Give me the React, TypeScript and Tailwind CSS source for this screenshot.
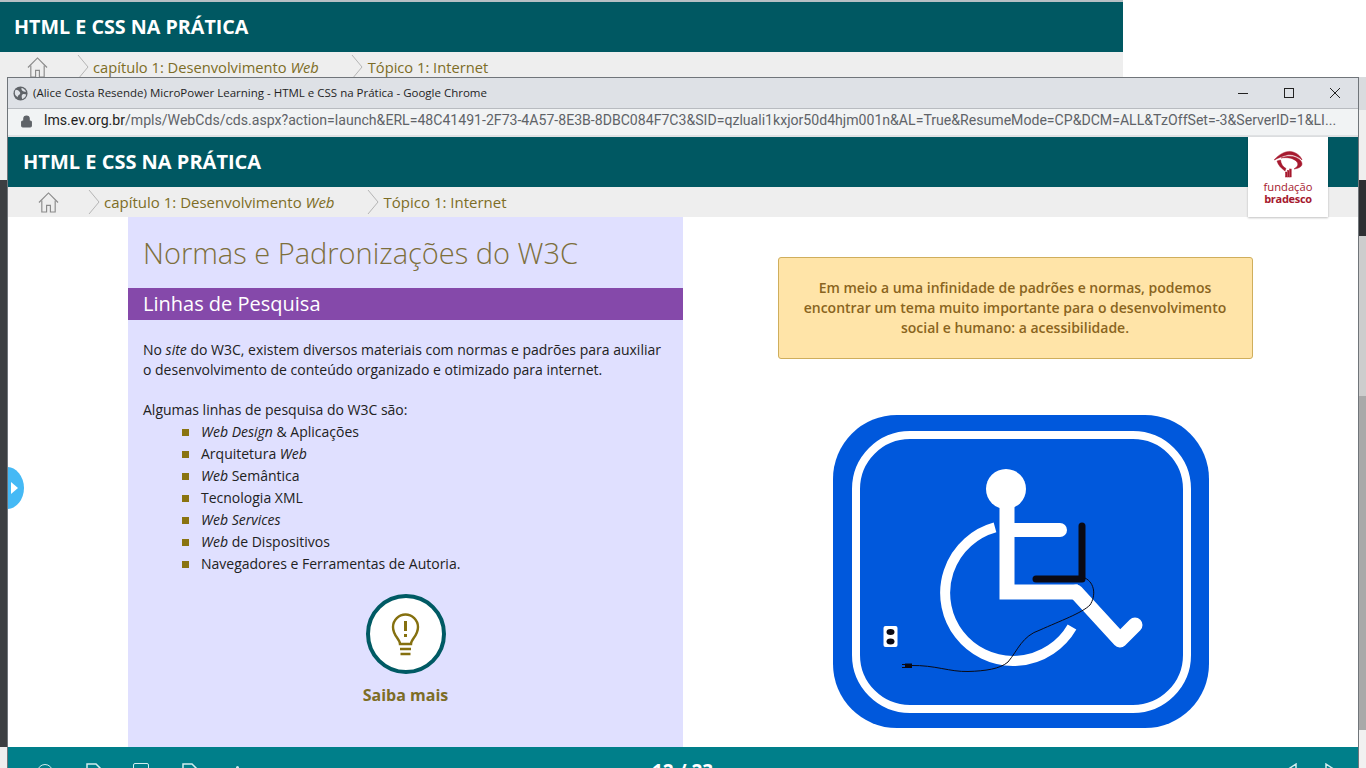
import React from 'react';
import { Lock } from 'lucide-react';

const openSans = { fontFamily: '"Open Sans", sans-serif' };

function HomeIcon({ className }: { className?: string }) {
  return (
    <svg viewBox="0 0 22 22" className={className} fill="none" stroke="#8a8a8a" strokeWidth="1.2">
      <path d="M1 11 11 1l10 10" />
      <path d="M4 9v12h5v-7h4v7h5V9" />
    </svg>
  );
}

function Chevron({ className }: { className?: string }) {
  return (
    <svg viewBox="0 0 12 26" className={className} fill="none" stroke="#b5b5b5" strokeWidth="1">
      <path d="M1 1l10 12L1 25" />
    </svg>
  );
}

function Breadcrumb({ className }: { className: string }) {
  return (
    <div className={`flex items-center text-[#7d6d26] ${className}`}>
      <HomeIcon className="w-[21px] h-[21px] mr-[29px]" />
      <Chevron className="w-[12px] h-[26px] mr-[4px]" />
      <span>capítulo 1: Desenvolvimento <em>Web</em></span>
      <Chevron className="w-[12px] h-[26px] ml-[32px] mr-[5px]" />
      <span>Tópico 1: Internet</span>
    </div>
  );
}

// Bradesco tree mark, coordinates are page pixels
function LogoMark() {
  return (
    <svg viewBox="1248 137 80 42" className="w-[80px] h-[42px] shrink-0" fill="#a6192e" stroke="#a6192e" strokeWidth="0.5">
      <path d="M1274 160C1280 153 1288 150 1293 152C1298 153.5 1301 157 1302 160C1298 156 1292 154 1287 155C1282 156 1279 158 1274 160Z" />
      <path d="M1281 158C1288 155 1296 156 1300 160C1304 164 1302 168 1294 169C1297 167 1299 165 1297 162C1294 158 1287 157 1281 158Z" />
      <path d="M1277 161C1278 165 1281 168 1285 171L1286 168.5C1283 167 1281 164 1280.5 160Z" />
      <rect x="1285.5" y="172" width="1.5" height="5" />
      <rect x="1287.6" y="170.5" width="1.5" height="6.5" />
      <rect x="1289.7" y="169" width="1.5" height="8" />
    </svg>
  );
}

function SignImage() {
  return (
    <svg viewBox="833 415 376 313" className="w-[376px] h-[313px]">
      <rect x="833" y="415" width="376" height="313" rx="64" fill="#0058dc" />
      <rect x="856" y="435" width="331" height="274" rx="54" fill="none" stroke="#fff" strokeWidth="8" />
      <circle cx="1006" cy="489" r="20" fill="#fff" />
      <path d="M1007 500V592H1078" fill="none" stroke="#fff" strokeWidth="15" />
      <path d="M1007 530H1060" fill="none" stroke="#fff" strokeWidth="14" strokeLinecap="round" />
      <path d="M1076 592 1120 640 1135 625" fill="none" stroke="#fff" strokeWidth="15" strokeLinecap="round" strokeLinejoin="round" />
      <path d="M995 527.4A68 68 0 1 0 1072 627" fill="none" stroke="#fff" strokeWidth="10" />
      <path d="M1082 526V579H1036" fill="none" stroke="#0a0a14" strokeWidth="7" strokeLinecap="round" strokeLinejoin="round" />
      <path d="M911 665.5C935 665 950 672 968 671.5C985 671 1000 669 1008 662C1018 650 1022 636 1040 630C1060 621 1082 613 1090 605C1096 596 1095 583 1085 578" fill="none" stroke="#0a0a14" strokeWidth="1" />
      <rect x="905" y="663.5" width="7" height="4.5" fill="#0a0a14" />
      <rect x="902" y="664" width="3" height="1" fill="#0a0a14" />
      <rect x="902" y="667" width="3" height="1" fill="#0a0a14" />
      <rect x="883.5" y="626" width="14" height="21" rx="2" fill="#fff" />
      <ellipse cx="890.5" cy="632" rx="4" ry="3" fill="#0a0a14" />
      <ellipse cx="890.5" cy="641.5" rx="4" ry="3" fill="#0a0a14" />
    </svg>
  );
}

const researchLines: React.ReactNode[] = [
  <><em>Web Design</em> &amp; Aplicações</>,
  <>Arquitetura <em>Web</em></>,
  <><em>Web</em> Semântica</>,
  <>Tecnologia XML</>,
  <><em>Web Services</em></>,
  <><em>Web</em> de Dispositivos</>,
  <>Navegadores e Ferramentas de Autoria.</>,
];

function LeftPanel() {
  return (
    <div className="w-[555px] ml-[120px] shrink-0 bg-[#e0e0ff] flex flex-col">
      <h1 className="px-[15px] pt-[16px] h-[71px] text-[29px] leading-[40px] font-light text-[#7d6f3c]">
        Normas e Padronizações do W3C
      </h1>
      <h2 className="h-[32px] bg-[#8549aa] px-[15px] text-[20px] leading-[32px] text-white">Linhas de Pesquisa</h2>
      <div className="px-[15px] pt-[20px] text-[14px] leading-[20px] text-[#222]">
        <p>
          No <em>site</em> do W3C, existem diversos materiais com normas e padrões para auxiliar o desenvolvimento de
          conteúdo organizado e otimizado para internet.
        </p>
        <p className="mt-[20px]">Algumas linhas de pesquisa do W3C são:</p>
        <ul className="mt-[1px] pl-[39px]">
          {researchLines.map((line, idx) => (
            <li key={idx} className="flex items-center h-[22px]">
              <span className="w-[7px] h-[7px] bg-[#8a7410] mr-[12px]" />
              <span>{line}</span>
            </li>
          ))}
        </ul>
      </div>
      <div className="flex flex-col items-center mt-[19px]">
        <div className="w-[80px] h-[80px] rounded-full bg-white border-[4px] border-[#005a64] flex items-center justify-center">
          <svg viewBox="0 0 29 43" className="w-[29px] h-[43px]" fill="none" stroke="#85700f" strokeWidth="2.4">
            <path d="M9 31c0-5-7-8-7-17C2 7 8 1.5 14.5 1.5S27 7 27 14c0 9-7 12-7 17z" />
            <path d="M14.5 8v10" strokeWidth="3" />
            <path d="M14.5 21v3" strokeWidth="3" />
            <path d="M9 36h11M9.5 41h10" />
          </svg>
        </div>
        <div className="mt-[10px] text-[16px] leading-[22px] font-bold text-[#7d6d26]">Saiba mais</div>
      </div>
    </div>
  );
}

function RightPanel() {
  return (
    <div className="flex-1 flex flex-col items-center pt-[40px]">
      <div className="w-[475px] h-[102px] mr-[11px] bg-[#ffe4a8] border border-[#cfae5c] rounded-[3px] flex items-center justify-center px-[20px] text-center text-[14px] leading-[20px] font-semibold text-[#8a6420]">
        Em meio a uma infinidade de padrões e normas, podemos encontrar um tema muito importante para o desenvolvimento social e humano: a acessibilidade.
      </div>
      <div className="mt-[56px] -mr-[1px]">
        <SignImage />
      </div>
    </div>
  );
}

function DocIcon({ className }: { className?: string }) {
  return (
    <svg viewBox="0 0 16 20" className={className} fill="none" stroke="#cfeef0" strokeWidth="1.5">
      <path d="M1 1h9l5 5v13H1z" />
    </svg>
  );
}

function BottomBar() {
  return (
    <div className="h-[40px] bg-[#007f8a] flex items-start pt-[16px] relative text-white">
      <div className="flex items-start ml-[29px]">
        <div className="w-[16px] h-[16px] mt-[1px] rounded-full border-[1.5px] border-[#cfeef0]" />
        <DocIcon className="w-[16px] h-[20px] ml-[33px]" />
        <div className="w-[16px] h-[16px] ml-[31px] rounded-t-[2px] border-[1.5px] border-[#cfeef0]" />
        <DocIcon className="w-[16px] h-[20px] ml-[33px]" />
        <div className="w-[3px] h-[3px] mt-[3px] ml-[38px] rounded-full bg-[#cfeef0]" />
      </div>
      <div className="absolute left-[644px] top-[11px] text-[19px] leading-[26px] font-bold whitespace-nowrap">12 / 23</div>
      <div className="absolute right-[19px] top-[16px] flex gap-[28px]">
        <svg viewBox="0 0 14 18" className="w-[14px] h-[18px]" fill="none" stroke="#cfeef0" strokeWidth="1.5"><path d="M13 1 1 9l12 8z" /></svg>
        <svg viewBox="0 0 14 18" className="w-[14px] h-[18px]" fill="none" stroke="#cfeef0" strokeWidth="1.5"><path d="M1 1l12 8-12 8z" /></svg>
      </div>
    </div>
  );
}

function PopupWindow() {
  return (
    <div className="absolute left-[7px] top-[77px] w-[1352px] h-[691px] border-l border-r border-t border-[#70757a] bg-white flex flex-col overflow-hidden">
      <div className="h-[31px] shrink-0 bg-[#dee1e6] flex items-center border-b border-[#b8bbc0] pl-[5px]">
        <svg viewBox="0 0 16 16" className="w-[15px] h-[15px] mr-[5px]">
          <circle cx="8" cy="8" r="7.5" fill="#5f6368" />
          <path d="M3 4c2 0 3 1 4 2s1 2 0 3-2 1-2 3c-1-1-3-2-3-4s0-3 1-4zM9 2c2 0 4 2 5 4-2 0-3 0-4-1s-1-2-1-3zM10 9c2-1 3 0 4 0 0 2-2 4-4 5-1-2-1-4 0-5z" fill="#dee1e6" />
        </svg>
        <span className="text-[11.5px] text-[#1f1f1f] whitespace-nowrap">(Alice Costa Resende) MicroPower Learning - HTML e CSS na Prática - Google Chrome</span>
        <div className="ml-auto flex items-center gap-[36px] pr-[18px]">
          <div className="w-[10px] h-[1px] bg-[#222]" />
          <div className="w-[10px] h-[10px] border border-[#222]" />
          <svg viewBox="0 0 10 10" className="w-[10px] h-[10px]" fill="none" stroke="#222" strokeWidth="1"><path d="M0 0l10 10M10 0 0 10" /></svg>
        </div>
      </div>
      <div className="h-[28px] shrink-0 bg-[#f1f3f4] flex items-center pl-[12px] pb-[2px] border-b-[2px] border-[#dfe1e3]" style={{ fontFamily: 'Roboto, sans-serif' }}>
        <Lock size={13} className="text-[#5f6368] mr-[11px]" fill="#5f6368" />
        <span className="text-[14.1px] text-[#5f6368] whitespace-nowrap">
          <span className="text-[#1f1f1f]">lms.ev.org.br</span>/mpls/WebCds/cds.aspx?action=launch&amp;ERL=48C41491-2F73-4A57-8E3B-8DBC084F7C3&amp;SID=qzluali1kxjor50d4hjm001n&amp;AL=True&amp;ResumeMode=CP&amp;DCM=ALL&amp;TzOffSet=-3&amp;ServerID=1&amp;LI...
        </span>
      </div>
      <div className="h-[50px] shrink-0 bg-[#005862] flex items-center pl-[15px] text-[20px] font-bold text-white">HTML E CSS NA PRÁTICA</div>
      <div className="h-[30px] shrink-0 bg-[#eeeeee] flex items-center pl-[30px]">
        <Breadcrumb className="text-[15px]" />
      </div>
      <div className="absolute right-[30px] top-[59px] w-[80px] h-[80px] bg-white shadow-[0_1px_2px_rgba(0,0,0,0.25)] flex flex-col items-center">
        <LogoMark />
        <div className="mt-[2px] text-[11.2px] leading-[12px] text-[#a6192e]">fundação</div>
        <div className="text-[11px] leading-[12px] font-bold tracking-[-0.3px] text-[#a6192e]">bradesco</div>
      </div>
      <div className="h-[530px] shrink-0 flex relative">
        <LeftPanel />
        <RightPanel />
      </div>
      <BottomBar />
      <div className="absolute left-[-1px] top-[389px] w-[17px] h-[42px] rounded-tr-[17px_21px] rounded-br-[17px_21px] bg-[#45b9f5] flex items-center pl-[4px]">
        <div className="w-0 h-0 border-y-[6px] border-y-transparent border-l-[7px] border-l-white" />
      </div>
    </div>
  );
}

export default function App() {
  return (
    <div className="relative w-[1366px] h-[768px] overflow-hidden bg-white" style={openSans}>
      <div className="w-[1123px]">
        <div className="h-[2px] bg-[#b6c0c4]" />
        <div className="h-[50px] bg-[#005862] flex items-center pl-[14px] text-[19.7px] font-bold text-white">HTML E CSS NA PRÁTICA</div>
        <div className="h-[40px] bg-[#eeeeee] flex items-start pt-[2px] pl-[27px]">
          <Breadcrumb className="text-[14.7px]" />
        </div>
      </div>
      <div className="absolute left-0 top-[92px] w-[7px] h-[88px] bg-[#eeeeee]" />
      <div className="absolute left-0 top-[180px] w-[7px] h-[567px] bg-[#3c3f42]" />
      <div className="absolute left-0 top-[747px] w-[7px] h-[21px] bg-[#eeeeee]" />
      <div className="absolute right-0 top-[77px] w-[7px] h-[33px] bg-[#d9dbde]" />
      <div className="absolute right-0 top-[110px] w-[7px] h-[70px] bg-[#efefef]" />
      <div className="absolute right-0 top-[180px] w-[7px] h-[56px] bg-[#2e3033]" />
      <div className="absolute right-0 top-[236px] w-[7px] h-[160px] bg-[#cdcdcd]" />
      <div className="absolute right-0 top-[396px] w-[7px] h-[334px] bg-[#a9a9a9]" />
      <div className="absolute right-0 top-[730px] w-[7px] h-[38px] bg-[#f1f1f1]" />
      <PopupWindow />
    </div>
  );
}
